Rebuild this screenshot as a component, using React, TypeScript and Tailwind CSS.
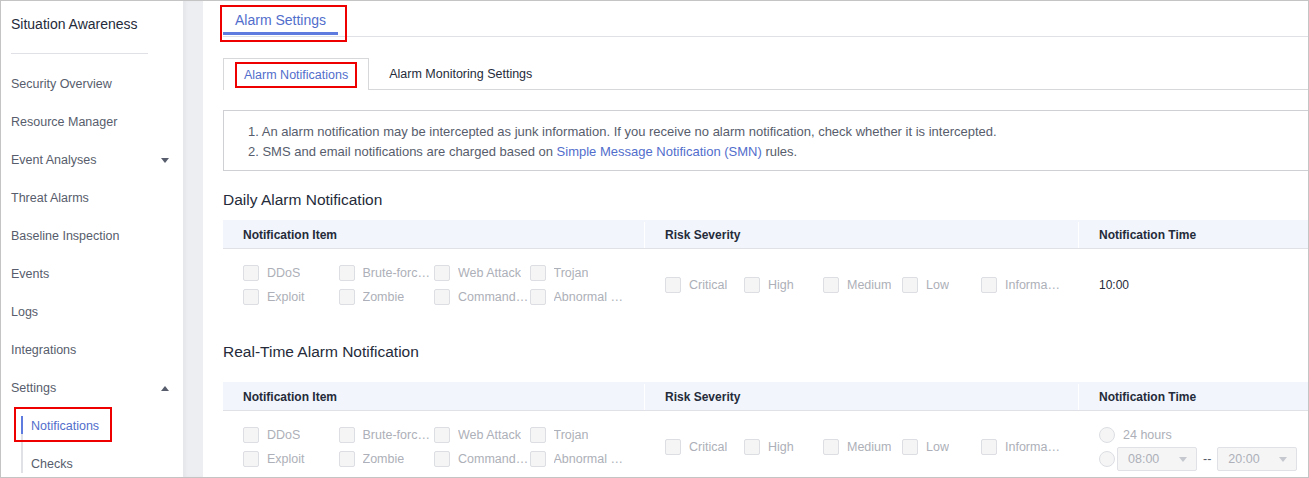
import React from 'react'

const navItems: { label: string; caret?: 'down' | 'up' }[] = [
  { label: 'Security Overview' },
  { label: 'Resource Manager' },
  { label: 'Event Analyses', caret: 'down' },
  { label: 'Threat Alarms' },
  { label: 'Baseline Inspection' },
  { label: 'Events' },
  { label: 'Logs' },
  { label: 'Integrations' },
  { label: 'Settings', caret: 'up' },
]

const alarmTypes = [
  'DDoS',
  'Brute-force Cracking',
  'Web Attack',
  'Trojan',
  'Exploit',
  'Zombie',
  'Command Execution',
  'Abnormal Behavior',
]

const severities = ['Critical', 'High', 'Medium', 'Low', 'Informational']

const Caret = ({ up, color = '#575d6c' }: { up?: boolean; color?: string }) => (
  <svg width="8" height="5" viewBox="0 0 8 5">
    <path d={up ? 'M0 5h8L4 0z' : 'M0 0h8L4 5z'} fill={color} />
  </svg>
)

const Checkbox = ({ label, width }: { label: string; width: string }) => (
  <div className={`flex h-6 items-center gap-2 ${width}`}>
    <span className="h-4 w-4 shrink-0 rounded-[2px] border border-[#dcdee3] bg-[#f5f5f6]" />
    <span className="min-w-0 truncate text-[#adb0b8]">{label}</span>
  </div>
)

const Radio = () => <span className="h-4 w-4 shrink-0 rounded-full border border-[#dcdee3] bg-[#f5f5f6]" />

const Select = ({ value }: { value: string }) => (
  <div className="flex h-6 w-[80px] items-center justify-between rounded-[2px] border border-[#dfe1e6] bg-[#f5f5f6] pl-[10px] pr-[9px] text-[#adb0b8]">
    <span>{value}</span>
    <Caret color="#c5c8cf" />
  </div>
)

function AlarmTable({ realTime }: { realTime?: boolean }) {
  return (
    <div className="w-[1100px] text-[12.5px]">
      <div className="flex h-[29px] border-b border-[#dfe1e6] bg-[#f2f5fc] pt-[2px] text-[12px] font-bold text-[#252b3a]">
        <div className="flex w-[421px] items-center pl-5">Notification Item</div>
        <div className="flex w-[434px] items-center border-l border-white pl-5">Risk Severity</div>
        <div className="flex flex-1 items-center border-l border-white pl-5">Notification Time</div>
      </div>
      <div className="flex pb-[10px] pt-[12px]">
        <div className="grid w-[421px] grid-cols-[repeat(4,95.5px)] pl-5">
          {alarmTypes.map((t) => (
            <Checkbox key={t} label={t} width="w-[95.5px]" />
          ))}
        </div>
        <div className="flex w-[434px] items-center pl-[21px]">
          {severities.map((s) => (
            <Checkbox key={s} label={s} width="w-[79px]" />
          ))}
        </div>
        <div className="flex flex-1 flex-col justify-center pl-[21px]">
          {realTime ? (
            <>
              <div className="flex h-6 items-center gap-2">
                <Radio />
                <span className="text-[#adb0b8]">24 hours</span>
              </div>
              <div className="flex h-6 items-center">
                <Radio />
                <div className="ml-[2px]">
                  <Select value="08:00" />
                </div>
                <span className="mx-[6px] text-[#575d6c]">--</span>
                <Select value="20:00" />
              </div>
            </>
          ) : (
            <span className="text-[12px] text-[#252b3a]">10:00</span>
          )}
        </div>
      </div>
    </div>
  )
}

export default function App() {
  return (
    <div className="flex h-[478px] w-[1309px] overflow-hidden border border-[#c4c4c4] bg-white font-['Liberation_Sans',Arial,sans-serif]">
      {/* Sidebar */}
      <div className="w-[182px] shrink-0 bg-white text-[12.5px] text-[#575d6c]">
        <div className="mt-[13px] pl-[10px] text-[14px] leading-[20px] text-[#252b3a]">Situation Awareness</div>
        <div className="ml-[10px] mt-[19px] h-px w-[137px] bg-[#dfe1e6]" />
        <div className="mt-[11px]">
          {navItems.map((item) => (
            <div key={item.label} className="flex h-[38px] items-center justify-between pl-[10px] pr-[14px]">
              <span>{item.label}</span>
              {item.caret && <Caret up={item.caret === 'up'} />}
            </div>
          ))}
          <div className="relative flex h-[38px]">
            <div className="ml-[20px] flex w-[2px] flex-col">
              <div className="h-[9px]" />
              <div className="h-[18px] bg-[#5e7ce0]" />
              <div className="flex-1 bg-[#dfe1e6]" />
            </div>
            <span className="ml-[8px] self-center text-[#526ecc]">Notifications</span>
            <div className="absolute left-[13px] top-[0px] h-[35px] w-[98px] border-2 border-[#ee0000]" />
          </div>
          <div className="flex h-[38px]">
            <div className="ml-[20px] h-[28px] w-[2px] bg-[#dfe1e6]" />
            <span className="ml-[8px] self-center">Checks</span>
          </div>
        </div>
      </div>

      {/* Gap band */}
      <div className="w-[20px] shrink-0 bg-[#edeef2] shadow-[inset_3px_0_3px_rgba(0,0,0,0.03)]" />

      {/* Main */}
      <div className="w-[1130px] shrink-0 pl-5 text-[12.5px] text-[#575d6c]">
        <div className="flex border-b border-[#dfe1e6]">
          <div className="relative mb-px border-b-[3px] border-[#5e7ce0] px-3 pb-[2px] pt-[9px] text-[14px] leading-[20px] text-[#526ecc]">
            Alarm Settings
            <div className="absolute left-[-3px] top-[4px] h-[37px] w-[127px] border-2 border-[#ee0000]" />
          </div>
        </div>

        <div className="mt-[21px] flex border-b border-[#d7d8da]">
          <div className="relative -mb-px flex h-[32px] items-center border border-b-0 border-[#d7d8da] bg-white px-5 pt-[2px] text-[#526ecc]">
            Alarm Notifications
            <div className="absolute left-[11px] top-[3px] h-[26px] w-[122px] border-2 border-[#ee0000]" />
          </div>
          <div className="flex h-[31px] items-center px-5 pt-[2px] text-[#252b3a]">Alarm Monitoring Settings</div>
        </div>

        <div className="mt-[20px] border border-[#cfd0d4] pb-[8px] pl-[24px] pt-[11px] text-[13px] leading-[20px]">
          <p>1. An alarm notification may be intercepted as junk information. If you receive no alarm notification, check whether it is intercepted.</p>
          <p>
            2. SMS and email notifications are charged based on{' '}
            <span className="text-[#526ecc]">Simple Message Notification (SMN)</span> rules.
          </p>
        </div>

        <div className="mt-[17px] text-[15.5px] leading-[24px] text-[#252b3a]">Daily Alarm Notification</div>
        <div className="mt-[8px]">
          <AlarmTable />
        </div>

        <div className="mt-[21px] text-[15.5px] leading-[24px] text-[#252b3a]">Real-Time Alarm Notification</div>
        <div className="mt-[18px]">
          <AlarmTable realTime />
        </div>
      </div>
    </div>
  )
}
